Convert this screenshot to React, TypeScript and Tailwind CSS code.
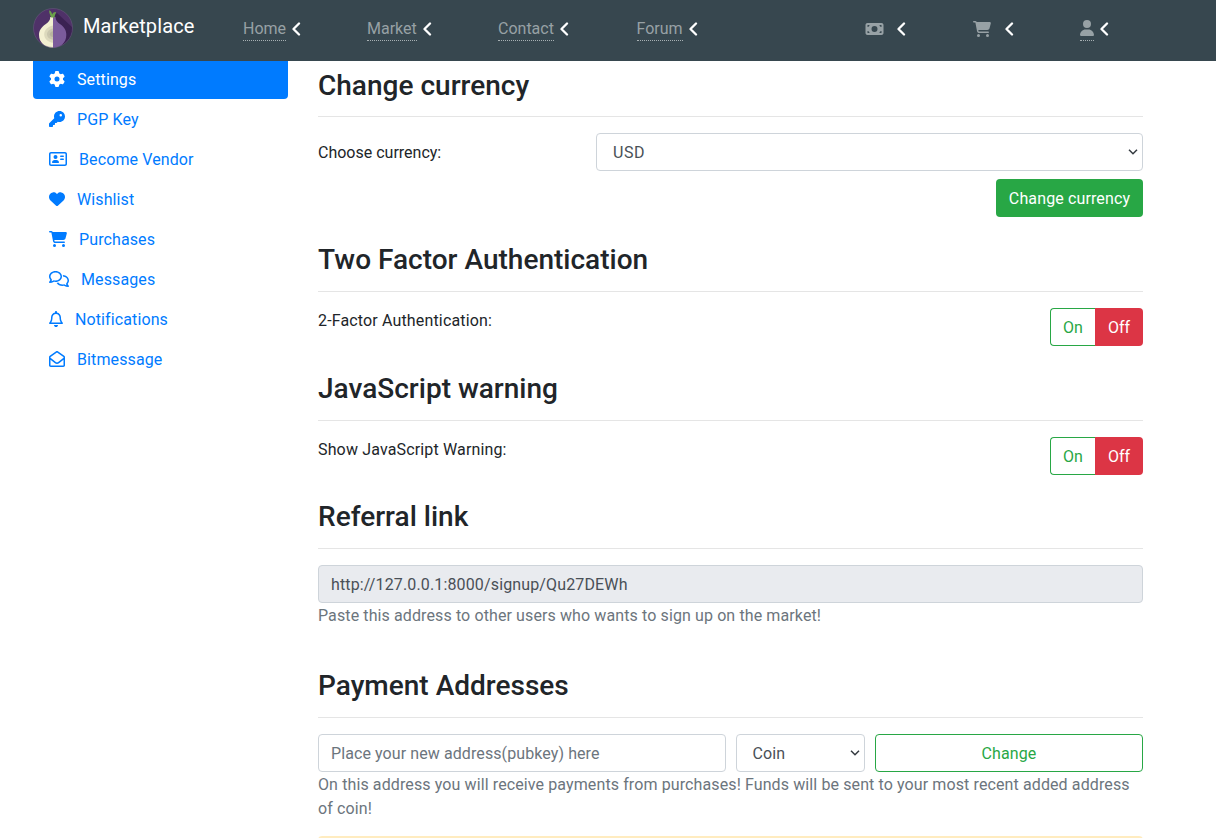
import type { ReactNode } from "react";
import {
  FaGear,
  FaKey,
  FaRegAddressCard,
  FaHeart,
  FaCartShopping,
  FaRegComments,
  FaRegBell,
  FaRegEnvelopeOpen,
  FaMoneyBill,
  FaUser,
} from "react-icons/fa6";

function OnionLogo() {
  return (
    <svg viewBox="0 0 40 40" className="size-10 shrink-0">
      <defs>
        <clipPath id="disc">
          <circle cx="20" cy="20" r="19.6" />
        </clipPath>
      </defs>
      <circle cx="20" cy="20" r="19.6" fill="#4f3168" />
      <path d="M20 8 L24 5 L40 20 V40 H22 Z" fill="#3b2252" clipPath="url(#disc)" />
      <path d="M20 9h-2.700c0 3.500-1.800 5-4.800 7.200C8.500 19.200 6 22 6 27c0 7.500 6.300 12.800 14 12.800z" fill="#f3f0d2" />
      <path d="M20 9h2.500c0 3.500 1.800 5 4.800 7.200 4 3 6 5.800 6 10.800 0 7.500-5.600 12.800-13.300 12.800z" fill="#7b5b9b" />
      <path d="M20 17.500c-5.500 1.300-8.800 4.500-8.800 8.800 0 4.600 3.800 8 8.800 8.500z" fill="#dcd9bd" />
      <path d="M20 20.500c-3.600.8-6 2.900-6 5.800s2.500 5 6 5.400z" fill="#c9c6ae" />
      <path d="M20 23.200c-1.800.3-3.200 1.400-3.200 3s1.400 2.700 3.200 2.900z" fill="#b8b59f" />
      <path d="M18.200 9.500C17 6.500 16 5 16.200 2.300c1.800 1 2.700 2.400 2.900 4.200.3-1.200 1.500-2.300 4-2.500-.3 2-1.900 3.700-1.400 5.500z" fill="#6ba04a" />
      <circle cx="20" cy="20" r="19.500" fill="none" stroke="#6d6080" strokeWidth=".5" />
    </svg>
  );
}

function Caret() {
  return (
    <svg viewBox="0 0 9 14" className="h-3.5 w-[9px]" fill="none" stroke="#fff" strokeWidth="2.3" strokeLinecap="round" strokeLinejoin="round">
      <path d="M7 1.500 1.500 7l5.500 5.500" />
    </svg>
  );
}

function NavLink({ children, className }: { children: ReactNode; className: string }) {
  return (
    <a className={`flex h-[25px] items-center gap-1.5 ${className}`}>
      <span className="h-[25px] border-b border-dotted border-[#a7b0b3] leading-[26px] tracking-normal text-[#97a1a5]">
        {children}
      </span>
      <Caret />
    </a>
  );
}

const menu = [
  { label: "Settings", icon: FaGear, size: "w-4", active: true },
  { label: "PGP Key", icon: FaKey, size: "w-4" },
  { label: "Become Vendor", icon: FaRegAddressCard, size: "w-[18px]" },
  { label: "Wishlist", icon: FaHeart, size: "w-4" },
  { label: "Purchases", icon: FaCartShopping, size: "w-[18px]" },
  { label: "Messages", icon: FaRegComments, size: "w-5" },
  { label: "Notifications", icon: FaRegBell, size: "w-3.5" },
  { label: "Bitmessage", icon: FaRegEnvelopeOpen, size: "w-4" },
];

function Title({ children }: { children: ReactNode }) {
  return (
    <>
      <h3 className="h-[33.6px] pt-[1.7px] text-[28px] leading-[33.6px] font-medium tracking-[0.01px] first:pt-[2.500px]">{children}</h3>
      <hr className="my-4 border-t border-black/10" />
    </>
  );
}

function Chevron() {
  return (
    <svg viewBox="0 0 10 6" className="h-1.5 w-2.5" fill="none" stroke="#343a40" strokeWidth="1.500">
      <path d="m1 .8 4 4 4-4" />
    </svg>
  );
}

function Toggle({ label }: { label: string }) {
  return (
    <div className="mb-6 flex h-[38px] justify-between">
      <span className="pt-px tracking-[0.15px]">{label}</span>
      <div className="flex tracking-normal">
        <button className="w-[45px] rounded-l-sm border border-r-0 border-[#28a745] pt-0.5 text-[#28a745]">On</button>
        <button className="w-12 rounded-r-sm bg-[#dc3545] pt-0.5 text-white">Off</button>
      </div>
    </div>
  );
}

export default function App() {
  return (
    <div className="h-[838px] overflow-hidden bg-white font-[Roboto,sans-serif] text-base leading-6 tracking-[0.11px] text-[#212529]">
      <nav className="flex h-[61px] items-start bg-[#37474f] pt-4 pl-[33px]">
        <div className="-mt-2 flex w-[210px] items-start gap-2.5 text-xl text-white">
          <OnionLogo />
          <span className="pt-[5px] leading-[26px]">Marketplace</span>
        </div>
        <NavLink className="w-[124px]">Home</NavLink>
        <NavLink className="w-[131px]">Market</NavLink>
        <NavLink className="w-[138.5px]">Contact</NavLink>
        <NavLink className="w-[228.5px]">Forum</NavLink>
        <a className="flex h-[25px] w-[108px] items-center gap-[13px] text-[#97a1a5]">
          <FaMoneyBill className="h-4 w-[19px]" />
          <Caret />
        </a>
        <a className="flex h-[25px] w-[107px] items-center gap-[13.500px] text-[#97a1a5]">
          <FaCartShopping className="h-4 w-[18px]" />
          <Caret />
        </a>
        <a className="flex items-center gap-1.5 text-[#97a1a5]">
          <span className="flex h-[25px] items-center border-b border-dotted border-[#a7b0b3]">
            <FaUser className="h-4 w-3.5" />
          </span>
          <Caret />
        </a>
      </nav>

      <div className="ml-[33px] flex w-[1110px] gap-[30px]">
        <aside className="w-[255px] shrink-0">
          {menu.map(({ label, icon: Icon, size, active }) => (
            <a
              key={label}
              className={`flex items-center gap-3 px-4 ${active ? "h-[38px] rounded-b bg-[#007bff] pb-0.5 text-white" : "h-10 text-[#007bff]"}`}
            >
              <Icon className={`h-4 ${size}`} />
              <span className="pt-0.5">{label}</span>
            </a>
          ))}
        </aside>

        <main className="min-w-0 flex-1 pt-[5.800px]">
          <Title>Change currency</Title>
          <div className="flex h-[38px] items-center justify-between">
            <label className="pt-0.5 tracking-normal">Choose currency:</label>
            <div className="flex h-[38px] w-[547px] items-center justify-between rounded border border-[#ced4da] pr-1 pl-4 text-[#495057]">
              <span className="pt-0.5 tracking-[0.5px]">USD</span>
              <Chevron />
            </div>
          </div>
          <div className="mt-2 mb-6 flex justify-end">
            <button className="h-[38px] w-[147px] rounded-sm bg-[#28a745] pt-0.5 tracking-[0.13px] text-white">Change currency</button>
          </div>

          <Title>Two Factor Authentication</Title>
          <Toggle label="2-Factor Authentication:" />

          <Title>JavaScript warning</Title>
          <Toggle label="Show JavaScript Warning:" />

          <Title>Referral link</Title>
          <div className="flex h-[38px] items-center rounded border border-[#ced4da] bg-[#e9ebef] px-3 pt-0.5 tracking-[0.14px] text-[#495057]">
            http://127.0.0.1:8000/signup/Qu27DEWh
          </div>
          <p className="mb-[39px] pt-px text-[#6c757d]">Paste this address to other users who wants to sign up on the market!</p>

          <Title>Payment Addresses</Title>
          <div className="flex h-[38px] gap-2.5">
            <div className="flex w-[408px] items-center rounded border border-[#ced4da] px-3 pt-0.5 tracking-[0.09px] text-[#6c757d]">
              Place your new address(pubkey) here
            </div>
            <div className="flex w-[129px] items-center justify-between rounded border border-[#ced4da] pr-1 pl-[15.500px] text-[#495057]">
              <span className="pt-0.5">Coin</span>
              <Chevron />
            </div>
            <button className="flex-1 rounded border border-[#28a745] pt-0.5 text-[#28a745]">Change</button>
          </div>
          <p className="mb-[15px] pt-px text-[#6c757d]">
            On this address you will receive payments from purchases! Funds will be sent to your most recent added address of coin!
          </p>
          <div className="h-12 rounded border-2 border-[#ffecc0] bg-[#fff3cd]" />
        </main>
      </div>
    </div>
  );
}
